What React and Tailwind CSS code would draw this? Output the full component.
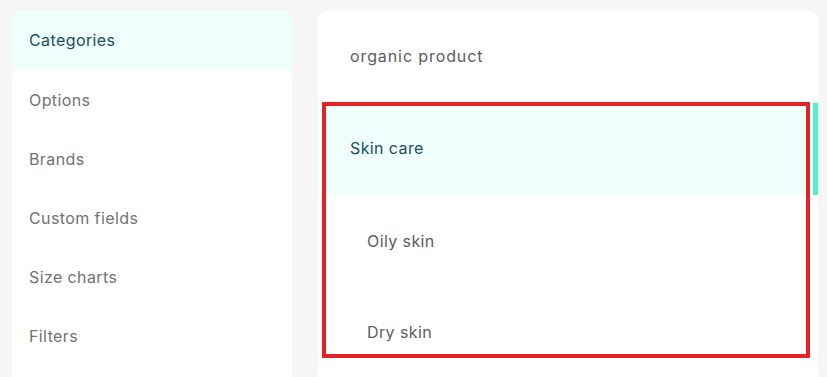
import React from "react";

const leftItems = ["Categories", "Options", "Brands", "Custom fields", "Size charts", "Filters"];

export default function App() {
  return (
    <div
      className="relative w-[827px] h-[377px] overflow-hidden bg-[#f6f6f6] flex gap-[26px] pl-[12px] pt-[11px]"
      style={{ fontFamily: "Inter, 'Noto Sans', sans-serif" }}
    >
      <div className="w-[280px] h-[400px] bg-white rounded-t-[8px] overflow-hidden flex flex-col">
        {leftItems.map((t, i) => (
          <div
            key={t}
            className={
              i === 0
                ? "h-[59px] flex items-center pl-[17px] pb-[1px] text-[16px] tracking-[0.4px] bg-[#effffb] text-[#1d4d5e]"
                : "h-[59px] flex items-center pl-[17px] text-[16px] tracking-[0.4px] text-[#727272]"
            }
          >
            {t}
          </div>
        ))}
      </div>
      <div className="w-[500px] h-[400px] bg-white rounded-t-[8px] overflow-hidden flex flex-col">
        <div className="h-[92px] flex items-center pl-[32px] pb-[2px] text-[16px] tracking-[0.9px] text-[#5c5c5c]">organic product</div>
        <div className="relative h-[92px] flex items-center pl-[32px] pb-[2px] text-[16px] tracking-[0.4px] bg-[#effffb] text-[#1d4d5e]">
          Skin care
          <div className="absolute right-0 top-0 h-full w-[5px] bg-[#50f2c9]" />
        </div>
        <div className="h-[92px] flex items-center pl-[49px] text-[16px] tracking-[0.4px] text-[#5c5c5c]">Oily skin</div>
        <div className="h-[92px] flex items-center pl-[49px] pb-[3px] text-[16px] tracking-[0.4px] text-[#5c5c5c]">Dry skin</div>
      </div>
      <div className="absolute left-[322px] top-[102px] w-[488px] h-[256px] border-[4px] border-[#e52228]" />
    </div>
  );
}
